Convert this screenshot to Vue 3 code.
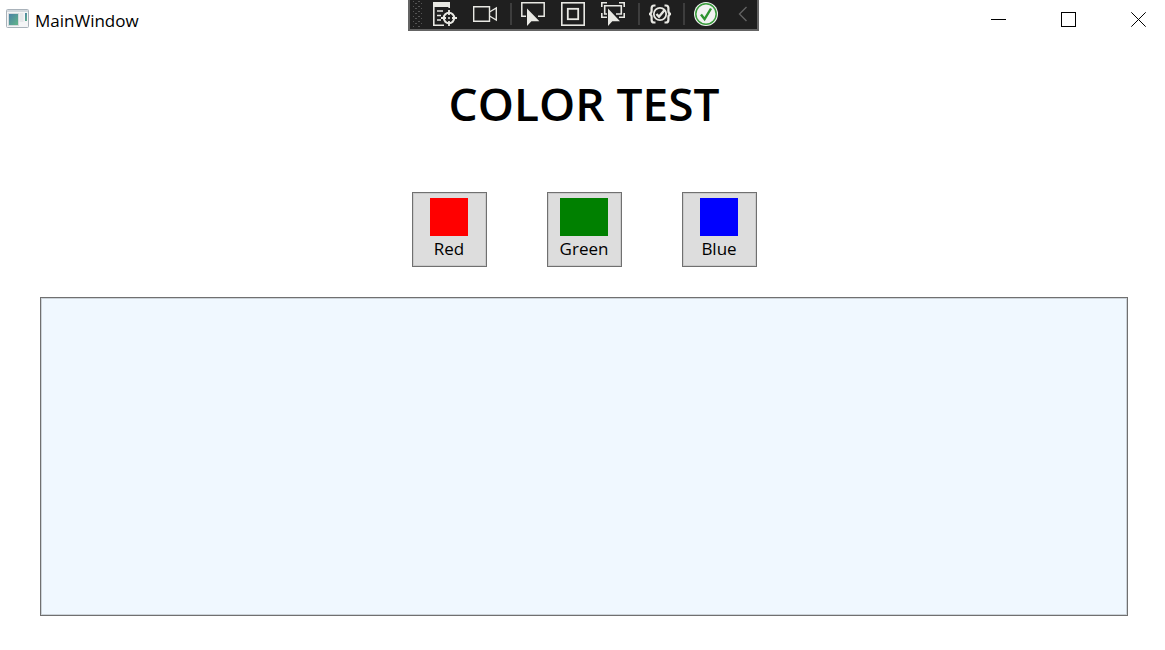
<template>
  <div class="window">
    <header class="title-bar">
      <svg class="app-icon" viewBox="0 0 24 20">
        <defs>
          <linearGradient id="pane" x1="0" y1="0" x2="1" y2="1">
            <stop offset="0" stop-color="#4a7fa8" />
            <stop offset="1" stop-color="#62b886" />
          </linearGradient>
        </defs>
        <rect x="0.5" y="0.5" width="22" height="18" rx="1" fill="#f4f5f6" stroke="#a9b2ba" />
        <path d="M1 2H22" stroke="#d3d9de" stroke-width="2" />
        <rect x="2.5" y="4.5" width="10" height="12" fill="url(#pane)" stroke="#d5dadd" />
        <rect x="13.5" y="4" width="4" height="9" fill="#e6e8ea" />
        <rect x="19" y="4" width="2" height="8" fill="url(#pane)" />
      </svg>
      <span class="caption">MainWindow</span>
      <div class="window-controls">
        <button type="button" aria-label="Minimize">
          <svg viewBox="0 0 15 15"><path d="M0 7.5H15" /></svg>
        </button>
        <button type="button" aria-label="Maximize">
          <svg viewBox="0 0 15 15"><rect x="0.5" y="0.5" width="14" height="14" /></svg>
        </button>
        <button type="button" aria-label="Close">
          <svg viewBox="0 0 15 15"><path d="M0.3 0.3L14.7 14.7M14.7 0.3L0.3 14.7" /></svg>
        </button>
      </div>
    </header>

    <div class="debug-layer">
      <div class="debug-bar" role="toolbar">
        <span class="grip"></span>
        <div class="tools">
          <button type="button" aria-label="Live Visual Tree">
            <svg viewBox="0 0 24 24">
              <path d="M0 0H17V5H0Z" fill="#e8e8e3" stroke="none" />
              <path d="M0.8 4V23.2H11M16.2 4V6M4 9H10M4 13.5H8M4 18H8" stroke-width="1.6" />
              <circle cx="16" cy="16" r="5.2" stroke-width="2" />
              <path d="M16 8V13M16 19V24M8 16H13M19 16H24" stroke-width="1.8" />
              <circle cx="16" cy="16" r="1" fill="#e8e8e3" stroke="none" />
            </svg>
          </button>
          <button type="button" aria-label="Record">
            <svg viewBox="0 0 24 24">
              <path d="M0.7 4.7H16.5V19.3H0.7Z" stroke-width="1.4" />
              <path d="M16.5 10L23.3 6V18L16.5 14" stroke-width="1.4" />
            </svg>
          </button>
        </div>
        <span class="separator"></span>
        <div class="tools">
          <button type="button" aria-label="Select Element">
            <svg viewBox="0 0 24 24">
              <path d="M5 14.2H0.8V0.8H23.2V14.2H17" stroke-width="1.5" />
              <path d="M6 6.5V24L10.4 19.2H18.4Z" fill="#e8e8e3" stroke="none" />
            </svg>
          </button>
          <button type="button" aria-label="Display Layout Adorners">
            <svg viewBox="0 0 24 24">
              <rect x="0.8" y="0.8" width="22.4" height="22.4" stroke-width="1.6" />
              <rect x="6.8" y="6.8" width="10.4" height="10.4" stroke-width="1.8" />
            </svg>
          </button>
          <button type="button" aria-label="Track Focused Element">
            <svg viewBox="0 0 24 24">
              <path d="M0.8 5V0.8H6M18 0.8H23.2V5M0.8 11V15.2H6M18 15.2H23.2V11" stroke-width="1.6" />
              <path d="M6 12H3.7V3.7H20.3V12H15" stroke-width="1.6" />
              <path d="M7 6.5V24L11.3 19.2H19Z" fill="#e8e8e3" stroke="none" />
            </svg>
          </button>
        </div>
        <span class="separator"></span>
        <button type="button" class="binding" aria-label="Binding Failures">
          <svg viewBox="0 0 24 24">
            <path d="M6.5 3.5H5Q2.6 3.5 2.6 6.3V9Q2.6 11.5 0.2 12Q2.6 12.5 2.6 15V17.7Q2.6 20.5 5 20.5H6.5M15.5 3.5H17Q19.4 3.5 19.4 6.3V9Q19.4 11.5 21.8 12Q19.4 12.5 19.4 15V17.7Q19.4 20.5 17 20.5H15.5" stroke-width="2.2" />
            <circle cx="11" cy="12" r="6.2" stroke-width="1.8" />
            <path d="M7.5 12L10 14.7L15.6 8" stroke-width="2.4" />
          </svg>
        </button>
        <span class="separator"></span>
        <button type="button" aria-label="Hot Reload">
          <svg viewBox="0 0 24 24">
            <circle cx="12" cy="12" r="12" fill="#f2f2f2" stroke="none" />
            <circle cx="12" cy="12" r="10.2" stroke="#389b3b" stroke-width="1.5" />
            <path d="M7 12.5L10.6 17.2L17 6.5" stroke="#2d932f" stroke-width="2.4" />
          </svg>
        </button>
        <button type="button" class="collapse" aria-label="Collapse">
          <svg viewBox="0 0 10 24"><path d="M8.5 5L1.5 12L8.5 19" stroke="#626262" stroke-width="1.4" /></svg>
        </button>
      </div>
    </div>

    <main class="content">
      <h1>COLOR TEST</h1>
      <div class="color-buttons">
        <button
          v-for="color in colors"
          :key="color.name"
          type="button"
          class="color-button"
          @click="panelColor = color.value"
        >
          <span class="stack">
            <span class="swatch" :style="{ background: color.value }"></span>
            <span class="name">{{ color.name }}</span>
          </span>
        </button>
      </div>
      <div class="color-panel" :style="{ background: panelColor }"></div>
    </main>
  </div>
</template>

<script setup>
import { ref } from 'vue';

const colors = [
  { name: 'Red', value: '#ff0000' },
  { name: 'Green', value: '#008000' },
  { name: 'Blue', value: '#0000ff' },
];

const panelColor = ref('#f0f8ff');
</script>

<style>
body {
  margin: 0;
  background: #fff;
}
</style>

<style scoped>
.window {
  position: relative;
  display: flex;
  flex-direction: column;
  min-height: 100vh;
  box-sizing: border-box;
  overflow-x: hidden;
  color: #000;
  font-family: "Open Sans", "Noto Sans", sans-serif;
}

button {
  padding: 0;
  border: none;
  background: none;
  font: inherit;
  color: inherit;
}

svg {
  display: block;
}

.title-bar {
  display: flex;
  align-items: flex-start;
  height: 38px;
  padding-left: 6px;
}

.app-icon {
  width: 24px;
  height: 20px;
  margin-top: 9px;
}

.caption {
  margin: 9px 0 0 5px;
  font-size: 17px;
  line-height: 24px;
}

.window-controls {
  display: flex;
  margin-left: auto;
}

.window-controls button {
  display: flex;
  align-items: center;
  justify-content: center;
  width: 70px;
  height: 38px;
}

.window-controls button:last-child {
  margin-right: -8px;
}

.window-controls svg {
  width: 15px;
  height: 15px;
  fill: none;
  stroke: #000;
}

/* floats over the top edge of the window */
.debug-layer {
  position: absolute;
  top: 0;
  left: 2px;
  right: 0;
  display: flex;
  justify-content: center;
  pointer-events: none;
}

.debug-bar {
  display: flex;
  align-items: center;
  height: 28px;
  padding: 0 9px 1px 3px;
  border: 2px solid #646464;
  border-top: none;
  background: #1f1f1f;
  pointer-events: auto;
}

.debug-bar svg {
  width: 24px;
  height: 24px;
  fill: none;
  stroke: #e8e8e3;
}

.grip {
  width: 9px;
  height: 27px;
  margin-right: 11px;
  background-image:
    radial-gradient(circle, #555 1px, transparent 1px),
    radial-gradient(circle, #555 1px, transparent 1px);
  background-size: 6px 5px;
  background-position: 0 0, 3px 3px;
}

.tools {
  display: flex;
  gap: 16px;
}

.separator {
  width: 2px;
  height: 22px;
  margin: 0 9px 0 13px;
  background: #3d3d3d;
}

.debug-bar .binding {
  width: 21px;
}

.debug-bar .collapse {
  margin-left: 20px;
}

.debug-bar .collapse svg {
  width: 10px;
}

.content {
  flex: 1;
  display: flex;
  flex-direction: column;
  align-items: center;
  padding: 34px 37px 34px 40px;
}

h1 {
  margin: 0;
  font-size: 46px;
  font-weight: 600;
  line-height: 62px;
}

.color-buttons {
  display: flex;
  gap: 60px;
  margin: 58px 0 30px;
}

.color-button {
  display: flex;
  justify-content: center;
  width: 75px;
  height: 75px;
  padding-top: 5px;
  border: 1px solid #707070;
  box-shadow: inset 0 0 0 1px #cacaca;
  background: #ddd;
}

.stack {
  display: flex;
  flex-direction: column;
}

.swatch {
  min-width: 38px;
  height: 38px;
}

.name {
  font-size: 17px;
  line-height: 26px;
  text-align: center;
}

.color-panel {
  flex: 1;
  align-self: stretch;
  border: 1px solid #707070;
  box-shadow: inset 0 0 0 1px #ccd3d9;
}
</style>
